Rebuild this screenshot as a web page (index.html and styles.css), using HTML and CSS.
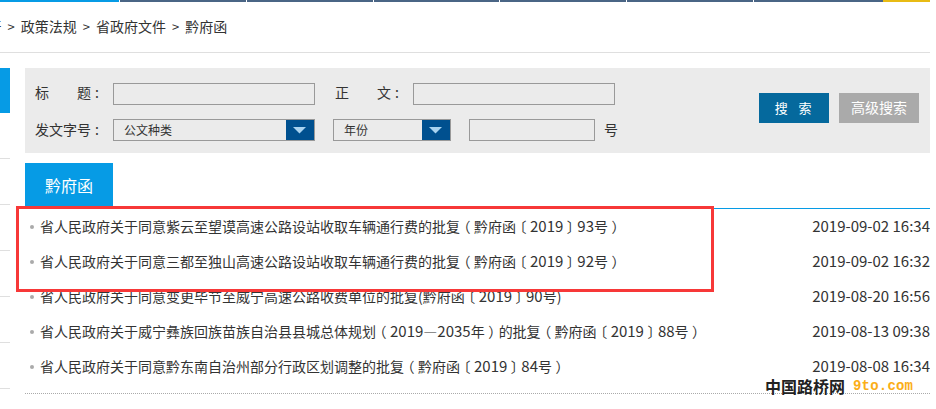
FILE: index.html
```html
<!DOCTYPE html>
<html lang="zh-CN">
  <head>
    <meta charset="UTF-8" />
    <meta name="viewport" content="width=device-width, initial-scale=1.0" />
    <title>黔府函</title>
    <link rel="stylesheet" href="styles.css">
  </head>
  <body>
    <div class="page">
      <div class="topbar">
        <span class="seg seg-blue"></span>
        <span class="seg seg-1"></span>
        <span class="seg seg-1"></span>
        <span class="seg seg-2"></span>
        <span class="seg seg-1"></span>
        <span class="seg seg-1"></span>
        <span class="seg seg-3"></span>
        <span class="seg seg-yellow"></span>
      </div>
      <div class="crumb">
        <span class="crumb-cut">公开</span>
        <span class="sep">&gt;</span>
        <span>政策法规</span>
        <span class="sep">&gt;</span>
        <span>省政府文件</span>
        <span class="sep">&gt;</span>
        <span>黔府函</span>
      </div>

      <div class="main">
        <div class="side">
          <div class="side-item side-on"></div>
          <div class="side-item"></div>
          <div class="side-item"></div>
          <div class="side-item"></div>
          <div class="side-item"></div>
          <div class="side-item"></div>
          <div class="side-item"></div>
        </div>

        <div class="content">
          <div class="search">
            <div class="search-form">
              <div class="form-row">
                <label class="lab lab-title"><span>标</span><span>题</span></label>
                <span class="colon">:</span>
                <input class="box box-wide" type="text" />
                <label class="lab lab-body"><span>正</span><span>文</span></label>
                <span class="colon colon-body">:</span>
                <input class="box box-wide" type="text" />
              </div>
              <div class="form-row">
                <label class="lab lab-title"><span>发</span><span>文</span><span>字</span><span>号</span></label>
                <span class="colon">:</span>
                <div class="pick pick-wide">
                  <span class="pick-text">公文种类</span>
                  <span class="pick-btn"><svg width="16" height="8" viewBox="0 0 16 8"><path d="M1 1h13L7.500 7.500z" fill="#a9d3f0" /></svg></span>
                </div>
                <div class="pick pick-year">
                  <span class="pick-text">年份</span>
                  <span class="pick-btn"><svg width="16" height="8" viewBox="0 0 16 8"><path d="M1 1h13L7.500 7.500z" fill="#a9d3f0" /></svg></span>
                </div>
                <input class="box box-num" type="text" />
                <span class="hao">号</span>
              </div>
            </div>
            <div class="search-btns">
              <button class="btn btn-go">搜&nbsp;&nbsp;索</button>
              <button class="btn btn-more">高级搜索</button>
            </div>
          </div>

          <div class="tabs">
            <div class="tab">黔府函</div>
          </div>

          <ul class="list">
            <li><span class="doc">省人民政府关于同意紫云至望谟高速公路设站收取车辆通行费的批复<i class="br">（</i>黔府函<i class="br">〔</i><b class="num">2019</b><i class="br">〕</i><b class="num">93</b>号<i class="br">）</i></span><span class="date">2019-09-02 16:34</span></li>
            <li><span class="doc">省人民政府关于同意三都至独山高速公路设站收取车辆通行费的批复<i class="br">（</i>黔府函<i class="br">〔</i><b class="num">2019</b><i class="br">〕</i><b class="num">92</b>号<i class="br">）</i></span><span class="date">2019-09-02 16:32</span></li>
            <li><span class="doc">省人民政府关于同意变更毕节至威宁高速公路收费单位的批复(黔府函<i class="br">〔</i><b class="num">2019</b><i class="br">〕</i><b class="num">90</b>号)</span><span class="date">2019-08-20 16:56</span></li>
            <li><span class="doc">省人民政府关于威宁彝族回族苗族自治县县城总体规划<i class="br">（</i><b class="num">2019</b>—<b class="num">2035</b>年<i class="br">）</i>的批复<i class="br">（</i>黔府函<i class="br">〔</i><b class="num">2019</b><i class="br">〕</i><b class="num">88</b>号<i class="br">）</i></span><span class="date">2019-08-13 09:38</span></li>
            <li><span class="doc">省人民政府关于同意黔东南自治州部分行政区划调整的批复<i class="br">（</i>黔府函<i class="br">〔</i><b class="num">2019</b><i class="br">〕</i><b class="num">84</b>号<i class="br">）</i></span><span class="date">2019-08-08 16:34</span></li>
          </ul>
        </div>
      </div>

      <div class="redbox"></div>
      <div class="mark"><span class="mark-cn">中国路桥网</span><span class="mark-en">9to.com</span></div>
    </div>
  </body>
</html>
```

FILE: styles.css
```css
body {
  font-family: "Noto Sans CJK SC", "Noto Sans", sans-serif;
  margin: 0;
  padding: 0;
  background-color: #fff;
  color: #333;
  font-size: 14px;
  overflow: hidden;
}

.page {
  position: relative;
  width: 930px;
  height: 409px;
  overflow: hidden;
}

/* top strip */
.topbar {
  display: flex;
  gap: 1px;
  height: 2px;
}

.seg {
  background-color: #4a6585;
  width: 126px;
}

.seg-blue {
  background-color: #069be5;
  width: 119px;
}

.seg-2 {
  width: 125px;
}

.seg-3 {
  width: 129px;
}

.seg-yellow {
  background-color: #e8bb14;
  width: 47px;
  margin-left: -1px;
}

.crumb {
  display: flex;
  align-items: center;
  height: 48px;
  padding-bottom: 2px;
  margin-left: -26.500px;
  gap: 6px;
  border-bottom: 1px solid #dfdfdf;
}

.crumb-cut {
  width: 28px;
}

.sep {
  font-size: 13px;
}

.main {
  display: flex;
  margin-top: 15px;
}

.side {
  width: 10px;
  flex-shrink: 0;
}

.side-item {
  height: 45px;
  border-bottom: 1px solid #dfdfdf;
}

.side-on {
  background-color: #069be5;
  border-bottom: 0;
}

.content {
  flex: 1;
  margin-left: 15px;
}

/* search panel */
.search {
  display: flex;
  justify-content: space-between;
  align-items: flex-start;
  height: 85px;
  background-color: #ebebeb;
}

.search-form {
  display: flex;
  flex-direction: column;
  gap: 14px;
  padding: 15px 0 0 10px;
}

.form-row {
  display: flex;
  align-items: center;
  height: 22px;
}

.lab {
  display: flex;
  justify-content: space-between;
  width: 56px;
  padding-bottom: 2px;
}

.form-row:first-child .lab,
.form-row:first-child .colon {
  padding-bottom: 4px;
}

.lab-body {
  margin-left: 20px;
}

.colon {
  width: 22px;
  padding-left: 4px;
  padding-bottom: 2px;
  box-sizing: border-box;
}

.box {
  height: 22px;
  box-sizing: border-box;
  border: 1px solid #999;
  background-color: #ebebeb;
  padding: 0;
}

.box-wide {
  width: 202px;
}

.box-num {
  width: 126px;
  margin-left: 18px;
}

.pick {
  display: flex;
  justify-content: space-between;
  height: 22px;
  box-sizing: border-box;
  border: 1px solid #999;
  font-size: 12px;
  line-height: 20px;
}

.pick-wide {
  width: 202px;
}

.pick-year {
  width: 118px;
  margin-left: 18px;
}

.pick-text {
  padding-left: 10px;
}

.pick-btn {
  display: flex;
  align-items: center;
  justify-content: center;
  width: 28px;
  background-color: #00508f;
}

.hao {
  margin-left: 9px;
  padding-bottom: 2px;
}

.search-btns {
  display: flex;
  gap: 10px;
  padding: 25px 11px 0 0;
}

.btn {
  height: 30px;
  border: 0;
  padding: 0 0 2px;
  color: #fff;
  font-family: inherit;
  font-size: 13px;
}

.btn-go {
  width: 70px;
  background-color: #05699d;
  letter-spacing: 1.700px;
}

.btn-more {
  width: 80px;
  background-color: #aaa;
  font-size: 14px;
}

/* tab + list */
.tabs {
  margin-top: 10px;
  border-bottom: 1px solid #069be5;
}

.tab {
  width: 88px;
  height: 45px;
  line-height: 45px;
  text-align: center;
  font-size: 16px;
  color: #fff;
  background-color: #069be5;
}

.list {
  list-style: none;
  margin: 0;
  padding: 0 0 9px;
  border-bottom: 1px dotted #aaa;
}

.list li {
  display: flex;
  justify-content: space-between;
  align-items: center;
  box-sizing: border-box;
  height: 35px;
  position: relative;
  padding: 0 0 2px 15px;
}

.list li::before {
  content: "";
  position: absolute;
  left: 5px;
  top: 16px;
  width: 4px;
  height: 4px;
  border-radius: 50%;
  background-color: #aaa;
}

.doc {
  white-space: nowrap;
}

.num {
  font-weight: normal;
  font-size: 15px;
}

/* the full-width brackets sit centred in the original font */
.br {
  font-style: normal;
  font-feature-settings: "halt";
  padding: 0 3.500px;
}

.date {
  font-size: 15px;
}

.redbox {
  position: absolute;
  left: 16px;
  top: 206px;
  width: 692px;
  height: 80px;
  border: 3px solid #f73838;
}

.mark {
  position: absolute;
  left: 765px;
  top: 374px;
  display: flex;
  align-items: center;
  gap: 8px;
}

.mark-cn {
  font-family: "Noto Sans CJK SC", serif;
  font-weight: bold;
  font-size: 16px;
  color: #222;
}

.mark-en {
  font-family: "Liberation Mono", monospace;
  font-weight: bold;
  font-size: 14px;
  letter-spacing: 0.200px;
  color: #fbae17;
}
```
